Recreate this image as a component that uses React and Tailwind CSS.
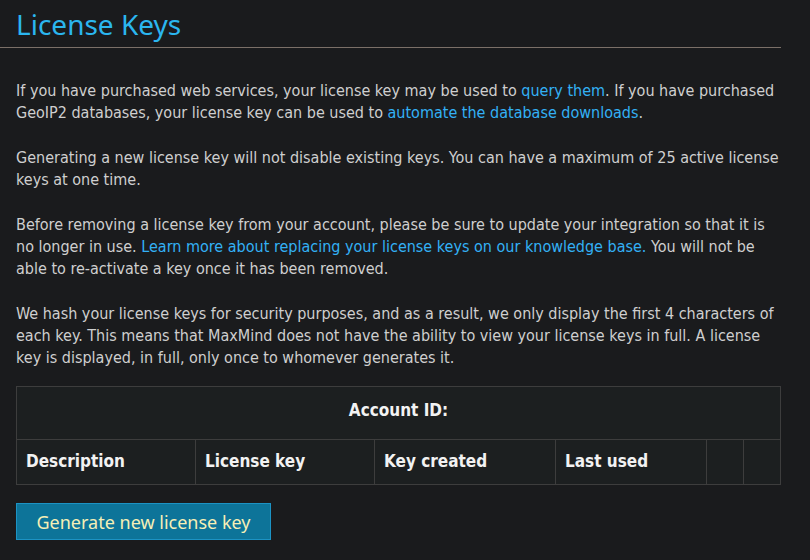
export default function App() {
  const body = { fontFamily: '"Liberation Sans Narrow", "DejaVu Sans Condensed", "Liberation Sans", sans-serif' };
  const head = { fontFamily: '"Noto Sans", "Open Sans", sans-serif' };
  return (
    <div className="w-[810px] h-[560px] bg-[#1a1b1d] overflow-hidden" style={body}>
      <div className="w-[781px]">
        <h1 className="pl-4 pt-[7px] pb-[6px] text-[28px] leading-[34px] text-[#2bb6ef]" style={head}>License Keys</h1>
        <div className="h-px bg-[#7b7068]"></div>
        <div className="pl-4 pr-[2px] pt-[32px] text-[16px] leading-[22px] text-[#cfcfcf] space-y-[23px]">
          <p>
            If you have purchased web services, your license key may be used to <a className="text-[#33b1f5]">query them</a>. If you have purchased GeoIP2 databases, your license key can be used to <a className="text-[#33b1f5]">automate the database downloads</a>.
          </p>
          <p>Generating a new license key will not disable existing keys. You can have a maximum of 25 active license keys at one time.</p>
          <p>
            Before removing a license key from your account, please be sure to update your integration so that it is no longer in use. <a className="text-[#33b1f5]">Learn more about replacing your license keys on our knowledge base.</a> You will not be able to re-activate a key once it has been removed.
          </p>
          <p>We hash your license keys for security purposes, and as a result, we only display the first 4 characters of each key. This means that MaxMind does not have the ability to view your license keys in full. A license key is displayed, in full, only once to whomever generates it.</p>
        </div>
        <div className="pl-4 pt-[17px]">
          <table className="w-[765px] border-collapse bg-[#1c1f20] text-[17px] font-bold text-[#f2f2f2]">
            <thead>
              <tr className="h-[53px]">
                <th colSpan={6} className="border border-[#3d3d3d] text-center pb-[5px]">Account ID:</th>
              </tr>
              <tr className="h-[45px]">
                <th className="w-[179px] border border-[#3d3d3d] text-left pl-[9px]">Description</th>
                <th className="w-[179px] border border-[#3d3d3d] text-left pl-[9px]">License key</th>
                <th className="w-[181px] border border-[#3d3d3d] text-left pl-[9px]">Key created</th>
                <th className="w-[151px] border border-[#3d3d3d] text-left pl-[9px]">Last used</th>
                <th className="w-[37px] border border-[#3d3d3d]"></th>
                <th className="w-[37px] border border-[#3d3d3d]"></th>
              </tr>
            </thead>
          </table>
          <button className="mt-[18px] w-[255px] h-[37px] bg-[#0d7499] border border-[#1c93c4] text-[#f6efb6] text-[18px] leading-[24px]" style={head}>
            Generate new license key
          </button>
        </div>
      </div>
    </div>
  );
}
